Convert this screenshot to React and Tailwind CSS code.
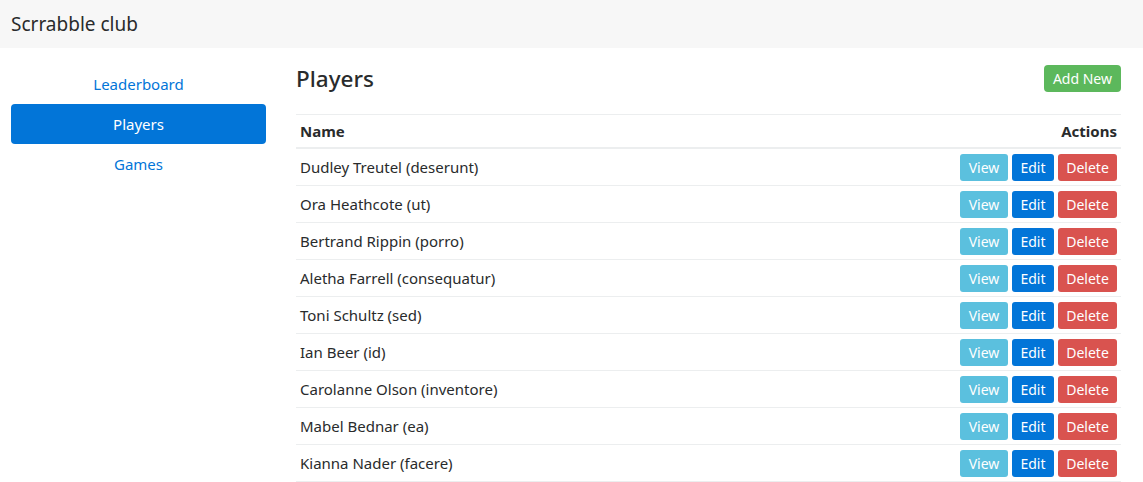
import React from "react";

const players = [
  "Dudley Treutel (deserunt)",
  "Ora Heathcote (ut)",
  "Bertrand Rippin (porro)",
  "Aletha Farrell (consequatur)",
  "Toni Schultz (sed)",
  "Ian Beer (id)",
  "Carolanne Olson (inventore)",
  "Mabel Bednar (ea)",
  "Kianna Nader (facere)",
];

export default function App() {
  return (
    <div className="min-h-screen bg-white text-[#292b2c]" style={{ fontFamily: '"Noto Sans", "Open Sans", sans-serif' }}>
      <div className="h-12 bg-[#f7f7f7] flex items-center px-[11px]">
        <span className="text-[19px] text-[#292b2c]">Scrrabble club</span>
      </div>
      <div className="flex pt-4 px-[11px]">
        <div className="w-[255px] flex flex-col shrink-0">
          <a className="h-10 flex items-center justify-center text-[15px] text-[#0275d8]">Leaderboard</a>
          <a className="h-10 flex items-center justify-center text-[15px] text-white bg-[#0275d8] rounded">Players</a>
          <a className="h-10 flex items-center justify-center text-[15px] text-[#0275d8]">Games</a>
        </div>
        <div className="ml-[30px] w-[825px]">
          <div className="flex items-start justify-between h-[50px]">
            <h1 className="text-[22.5px] leading-[30px] font-medium">Players</h1>
            <button className="mt-px h-[27px] px-[9px] bg-[#5cb85c] text-white text-[14px] rounded">Add New</button>
          </div>
          <div className="border-t border-[#eceeef]">
            <div className="h-[34px] flex items-center justify-between px-1 font-bold text-[15px] border-b-2 border-[#eceeef]">
              <span>Name</span>
              <span>Actions</span>
            </div>
            {players.map((p) => (
              <div key={p} className="h-[37px] flex items-center justify-between px-1 border-b border-[#eceeef] text-[15px]">
                <span>{p}</span>
                <div className="flex gap-1">
                  <button className="h-[27px] w-12 bg-[#5bc0de] text-white text-[14px] rounded-[3px]">View</button>
                  <button className="h-[27px] w-[42px] bg-[#0275d8] text-white text-[14px] rounded-[3px]">Edit</button>
                  <button className="h-[27px] w-[59px] bg-[#d9534f] text-white text-[14px] rounded-[3px]">Delete</button>
                </div>
              </div>
            ))}
          </div>
        </div>
      </div>
    </div>
  );
}
